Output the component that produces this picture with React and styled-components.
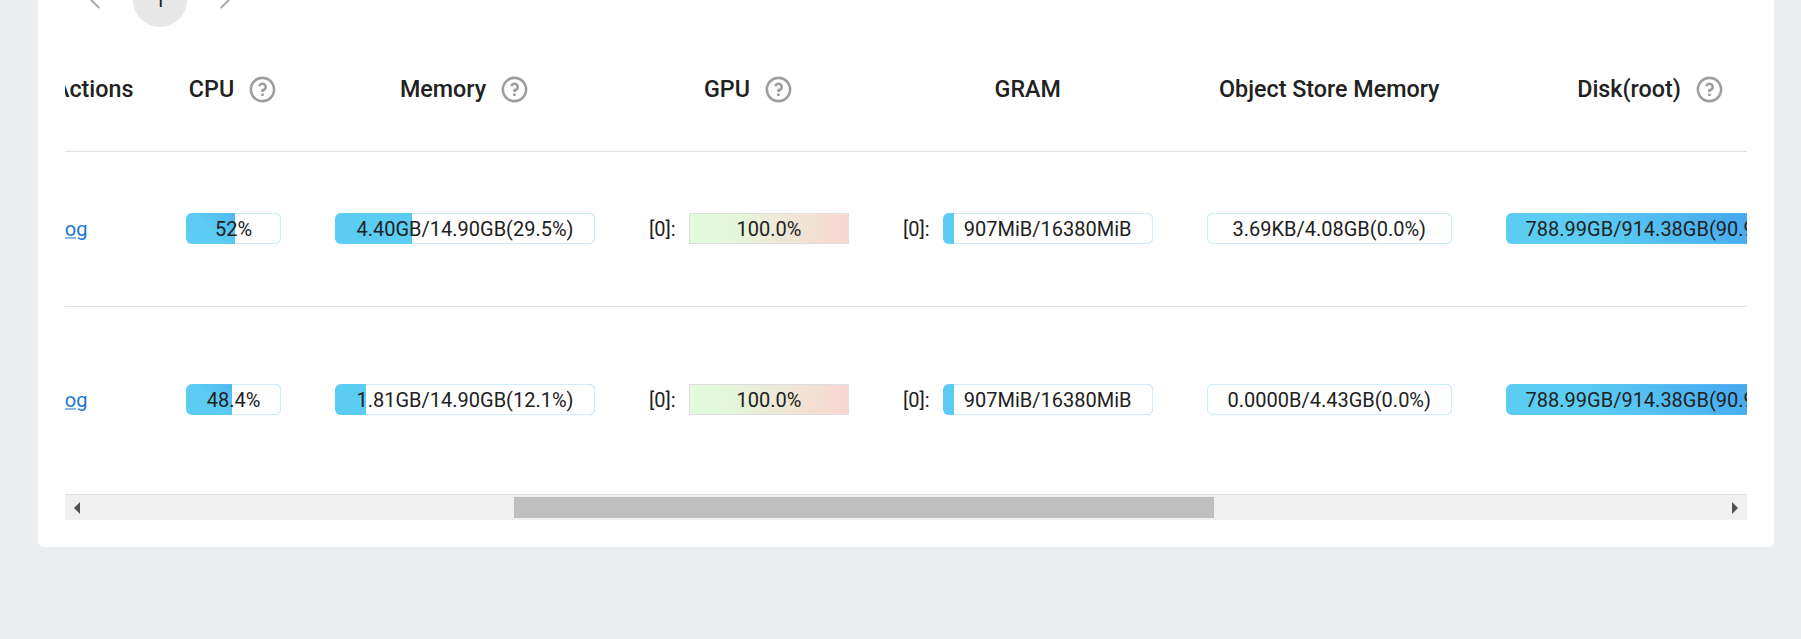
import React from "react";
import styled, { createGlobalStyle } from "styled-components";
import { RiQuestionLine } from "react-icons/ri";
import { ChevronLeft, ChevronRight } from "lucide-react";

const Global = createGlobalStyle`
  html, body { margin: 0; padding: 0; height: 639px; overflow: hidden; background: #eaeef1; }
  body { font-family: Roboto, "Liberation Sans", sans-serif; color: #212121; }
`;

const Page = styled.div`
  padding: 0 27px 0 38px;
`;

const Card = styled.section`
  margin-top: -27px;
  height: 574px;
  box-sizing: border-box;
  padding: 0 27px 27px;
  background: #fff;
  border-radius: 0 0 6px 6px;
`;

const Pagination = styled.nav`
  display: flex;
  gap: 11px;
  padding-left: 3px;
  height: 54px;
`;

const PageItem = styled.div`
  width: 54px;
  height: 54px;
  border-radius: 50%;
  display: flex;
  align-items: center;
  justify-content: center;
  font-size: 20px;
  color: #212121;
  background: ${(p) => (p.$active ? "#e8e8e8" : "transparent")};
  svg { color: #a8a8a8; }
`;

const Scroller = styled.div`
  overflow: hidden;
  width: 1682px;
`;

const Inner = styled.div`
  margin-left: -11px;
  width: 1800px;
`;

const Grid = styled.div`
  display: grid;
  grid-template-columns: 78px 95px 260px 200px 249.5px 245.5px 290px;
  column-gap: 54px;
  align-items: center;
`;

const HeadRow = styled(Grid)`
  height: 124px;
  font-size: 23.3px;
  font-weight: 500;
  color: #212121;
`;

const BodyRow = styled(Grid)`
  box-sizing: border-box;
  height: ${(p) => p.$h}px;
  padding-bottom: ${(p) => p.$pb}px;
  font-size: 20px;
`;

const Rule = styled.div`
  height: 1px;
  background: #e0e0e0;
`;

const HeadCell = styled.div`
  display: flex;
  align-items: center;
  justify-content: ${(p) => (p.$left ? "flex-start" : "center")};
  gap: 13px;
  white-space: nowrap;
  svg { color: #9e9e9e; flex: none; }
`;

const LogLink = styled.a`
  color: #1976d2;
  text-decoration: underline;
  text-decoration-color: rgba(25, 118, 210, 0.5);
`;

const Device = styled.div`
  display: flex;
  align-items: center;
  gap: 13px;
  white-space: nowrap;
`;

const Bar = styled.div`
  position: relative;
  flex: 1;
  height: 31px;
  box-sizing: border-box;
  border-radius: 6px;
  overflow: hidden;
  background: linear-gradient(45deg, #5bcdf3 30%, #44a3ee 90%);
  display: flex;
  align-items: center;
  justify-content: center;
  white-space: nowrap;
  &::after {
    content: "";
    position: absolute;
    inset: 0;
    border: 1px solid rgba(110, 200, 245, 0.32);
    border-radius: 6px;
  }
`;

const BarMask = styled.div`
  position: absolute;
  top: 0;
  right: 0;
  bottom: 0;
  background: #fff;
`;

const BarText = styled.span`
  position: relative;
  z-index: 1;
  color: #212121;
`;

const UsageBar = styled.div`
  flex: 1;
  height: 31px;
  box-sizing: border-box;
  border: 1px solid #dedede;
  background: linear-gradient(90deg, #e1fbdc 0%, #e6f5da 30%, #f9d6d1 100%);
  display: flex;
  align-items: center;
  justify-content: center;
`;

const Track = styled.div`
  display: flex;
  align-items: center;
  height: 25px;
  border-top: 1px solid #e0e0e0;
  background: #f0f0f0;
  position: relative;
`;

const Thumb = styled.div`
  margin-left: 449px;
  width: 700px;
  height: 21px;
  background: #bfbfbf;
`;

const Arrow = styled.i`
  position: absolute;
  top: 7px;
  ${(p) => (p.$right ? "right: 9px;" : "left: 9px;")}
  width: 0;
  height: 0;
  border-top: 6px solid transparent;
  border-bottom: 6px solid transparent;
  ${(p) => (p.$right ? "border-left: 6px solid #505050;" : "border-right: 6px solid #505050;")}
`;

const Help = () => <RiQuestionLine size={31} />;

const Percent = ({ value, children }) => (
  <Bar>
    <BarMask style={{ width: `${100 - value}%` }} />
    <BarText>{children}</BarText>
  </Bar>
);

const rows = [
  { h: 154, pb: 1, cpu: 52, cpuT: "52%", mem: 29.5, memT: "4.40GB/14.90GB(29.5%)", obj: "3.69KB/4.08GB(0.0%)" },
  { h: 187, pb: 2, cpu: 48.4, cpuT: "48.4%", mem: 12.1, memT: "1.81GB/14.90GB(12.1%)", obj: "0.0000B/4.43GB(0.0%)" },
];

export default function App() {
  return (
    <Page>
      <Global />
      <Card>
        <Pagination>
          <PageItem><ChevronLeft size={30} strokeWidth={1.5} /></PageItem>
          <PageItem $active>1</PageItem>
          <PageItem><ChevronRight size={30} strokeWidth={1.5} /></PageItem>
        </Pagination>
        <Scroller>
          <Inner>
            <HeadRow>
              <HeadCell $left>Actions</HeadCell>
              <HeadCell>CPU <Help /></HeadCell>
              <HeadCell>Memory <Help /></HeadCell>
              <HeadCell>GPU <Help /></HeadCell>
              <HeadCell>GRAM</HeadCell>
              <HeadCell>Object Store Memory</HeadCell>
              <HeadCell>Disk(root) <Help /></HeadCell>
            </HeadRow>
            <Rule />
            {rows.map((r, i) => (
              <React.Fragment key={r.cpuT}>
                <BodyRow $h={r.h} $pb={r.pb}>
                  <div><LogLink href="#">Log</LogLink></div>
                  <Percent value={r.cpu}>{r.cpuT}</Percent>
                  <Percent value={r.mem}>{r.memT}</Percent>
                  <Device>[0]: <UsageBar><BarText>100.0%</BarText></UsageBar></Device>
                  <Device>[0]: <Percent value={5.5}>907MiB/16380MiB</Percent></Device>
                  <Percent value={0}>{r.obj}</Percent>
                  <Percent value={90.9}>788.99GB/914.38GB(90.9%)</Percent>
                </BodyRow>
                {i === 0 && <Rule />}
              </React.Fragment>
            ))}
          </Inner>
          <Track>
            <Arrow />
            <Thumb />
            <Arrow $right />
          </Track>
        </Scroller>
      </Card>
    </Page>
  );
}
